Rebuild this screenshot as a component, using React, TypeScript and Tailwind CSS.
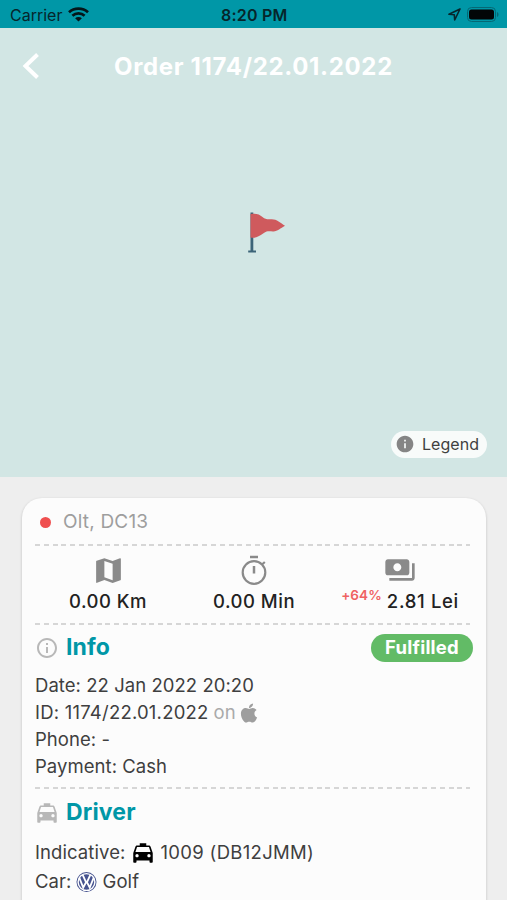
import React from "react";
import { FaApple } from "react-icons/fa";
import { MdInfo, MdInfoOutline, MdLocalTaxi, MdMap, MdPayments } from "react-icons/md";

function StatusBar() {
  return (
    <div className="relative flex h-7 items-center justify-between bg-[#0097a7] pl-[10px] pr-2 text-[#06262b]">
      <div className="flex items-center gap-[6px] pt-[1px]">
        <span className="text-[16px] leading-none">Carrier</span>
        <svg width="21" height="15" viewBox="0 0 21 15" fill="none" stroke="#04161a" strokeWidth="2.7">
          <path d="M1 5.2C6.2.3 14.8.3 20 5.2" />
          <path d="M4.4 8.8c3.4-3.2 8.8-3.2 12.2 0" />
          <path d="M10.5 14.6 7.1 11.3c1.9-1.7 4.9-1.7 6.8 0z" fill="#04161a" stroke="none" />
        </svg>
      </div>
      <span className="absolute left-[221px] top-[7px] text-[16px] leading-none font-semibold tracking-[0.2px]">
        8:20 PM
      </span>
      <div className="flex items-center gap-[6px]">
        <svg className="mt-[1px]" width="13" height="13" viewBox="0 0 13 13" fill="none" stroke="#06262b" strokeWidth="1.600" strokeLinejoin="round">
          <path d="M12 1 1 6.300l5.300.4.4 5.300z" />
        </svg>
        <svg className="mt-[1px]" width="32" height="16" viewBox="0 0 32 16">
          <rect x="0.5" y="0.5" width="28" height="14" rx="4" fill="none" stroke="#056874" />
          <rect x="2" y="2.500" width="25" height="10" rx="2.5" fill="#020607" />
          <path d="M30 5v5c2-.8 2-4.200 0-5z" fill="#056874" />
        </svg>
      </div>
    </div>
  );
}

function Divider() {
  return (
    <div className="h-[2px] w-[435px] bg-[repeating-linear-gradient(90deg,#d6d6d6_0_5px,transparent_5px_8.8px)]" />
  );
}

function Flag() {
  return (
    <svg className="absolute left-[247px] top-[211px]" width="38" height="43" viewBox="0 0 38 43">
      <path d="M3.500 1.500h2.800V39.500h2.700v2H1.200v-2h2.300z" fill="#3c6478" />
      <path d="M3.500 3c5-1 9 0 12 3 3 2.400 5 2.500 9 2.200 5-.2 9 3.500 13.500 6.600-4.500 2.400-7.500 5.600-11.500 5.700-4 .1-6-1-10 1.800C11.500 25.600 8.500 27.600 3.500 26.500z" fill="#cf5a5d" />
    </svg>
  );
}

function Stopwatch() {
  return (
    <svg width="32" height="32" viewBox="0 0 32 32" fill="none" stroke="#8a8a8a" strokeWidth="2.200">
      <circle cx="16" cy="18.500" r="11.300" />
      <path d="M12 3h8M16 12v7.500" strokeWidth="2.500" />
      <path d="m24 10.500 2.800-2.500" />
    </svg>
  );
}

function VwLogo() {
  return (
    <svg width="21" height="22" viewBox="0 0 22 22" fill="none">
      <circle cx="11" cy="11" r="10.500" fill="#46538f" />
      <circle cx="11" cy="11" r="8.800" stroke="#fff" strokeWidth="1.500" />
      <path d="M7 3.500 10.200 10.600h1.600L15 3.500" stroke="#fff" strokeWidth="1.900" />
      <path d="M3.500 6.600 7.600 16.800 10.300 11.600h1.400L14.400 16.800l4.100-10.200" stroke="#fff" strokeWidth="1.900" />
    </svg>
  );
}

export default function App() {
  return (
    <div className="h-[900px] w-[507px] overflow-hidden bg-[#eeeeee] font-['Inter',sans-serif] text-[#3f3f3f]">
      <StatusBar />
      <div className="relative h-[449px] bg-[#d2e6e4]">
        <svg className="absolute left-[22px] top-[24px]" width="18" height="28" viewBox="0 0 18 28" fill="none" stroke="#fff" strokeWidth="4">
          <path d="M15.500 2.500 3.500 14l12 11.500" />
        </svg>
        <h1 className="pt-[27px] text-center text-[24px] leading-[24px] font-bold tracking-[0.66px] text-white">
          Order 1174/22.01.2022
        </h1>
        <div className="absolute left-0 top-[-28px]">
          <Flag />
        </div>
        <div className="absolute left-[391px] top-[403px] flex h-[27px] w-[96px] items-center gap-[7px] rounded-full bg-[#f8fbfa] pb-[1px] pl-1">
          <MdInfo size={20} color="#858585" />
          <span className="text-[16px] leading-none tracking-[0.05px]">Legend</span>
        </div>
      </div>

      <div className="ml-[22px] mt-[21px] h-[430px] w-[464px] rounded-[20px] bg-[#fcfcfc] pl-[13px] shadow-[0_1px_3px_rgba(0,0,0,0.2)]">
        <div className="flex h-[46px] items-center pt-[2px]">
          <span className="ml-[5px] size-[11px] rounded-full bg-[#ef4f4f]" />
          <span className="ml-[12px] pt-[1px] text-[19px] tracking-[0.2px] text-[#9e9e9e]">Olt, DC13</span>
        </div>
        <Divider />
        <div className="flex h-[77px] w-[438px] text-[18.500px] font-medium tracking-[0.5px] text-[#222]">
          <div className="flex flex-1 flex-col items-center pt-[8px]">
            <MdMap size={33} color="#8a8a8a" />
            <span className="mt-[1px] leading-[26px]">0.00 Km</span>
          </div>
          <div className="flex flex-1 flex-col items-center pt-[8px]">
            <Stopwatch />
            <span className="mt-[2px] leading-[26px]">0.00 Min</span>
          </div>
          <div className="flex flex-1 flex-col items-center pt-[8px]">
            <MdPayments size={32} color="#8a8a8a" />
            <div className="mt-[2px] flex leading-[26px] whitespace-nowrap">
              <span className="mr-[5px] mt-[-6px] text-[13.500px] font-semibold tracking-[0.1px] text-[#ef6262]">+64%</span>
              <span className="tracking-[0.65px]">2.81 Lei</span>
            </div>
          </div>
        </div>
        <Divider />
        <div className="flex h-[47px] w-[438px] items-center pb-[2px]">
          <MdInfoOutline size={24} color="#b8b8b8" />
          <h2 className="ml-[7px] text-[23px] font-bold tracking-[0.1px] text-[#0097a7]">Info</h2>
          <span className="ml-auto flex h-[28px] w-[102px] items-center justify-center rounded-full bg-[#62bb66] text-[18.500px] font-bold tracking-[0.2px] text-white">
            Fulfilled
          </span>
        </div>
        <div className="h-[115px] text-[18.500px] leading-[27px] tracking-[0.05px]">
          <p>Date: 22 Jan 2022 20:20</p>
          <p className="flex items-center tracking-[0.22px]">
            ID: 1174/22.01.2022
            <span className="ml-[5px] mr-[2px] text-[#aaa] tracking-normal">on</span>
            <FaApple size={22} color="#9e9e9e" />
          </p>
          <p>Phone: -</p>
          <p>Payment: Cash</p>
        </div>
        <Divider />
        <div className="flex h-[49px] items-center pb-[2px]">
          <MdLocalTaxi className="ml-[-1px]" size={26} color="#b8b8b8" />
          <h2 className="ml-[6px] text-[23px] font-bold tracking-[0.15px] text-[#0097a7]">Driver</h2>
        </div>
        <div className="text-[18.500px] leading-[29px] tracking-[0.08px]">
          <p className="flex items-center">
            Indicative:
            <MdLocalTaxi className="ml-[5px] mr-[4px]" size={26} color="#000" />
            <span className="tracking-[0.32px]">1009 (DB12JMM)</span>
          </p>
          <p className="flex items-center">
            Car:
            <span className="ml-[4px] mr-[6px]">
              <VwLogo />
            </span>
            Golf
          </p>
        </div>
      </div>
    </div>
  );
}
